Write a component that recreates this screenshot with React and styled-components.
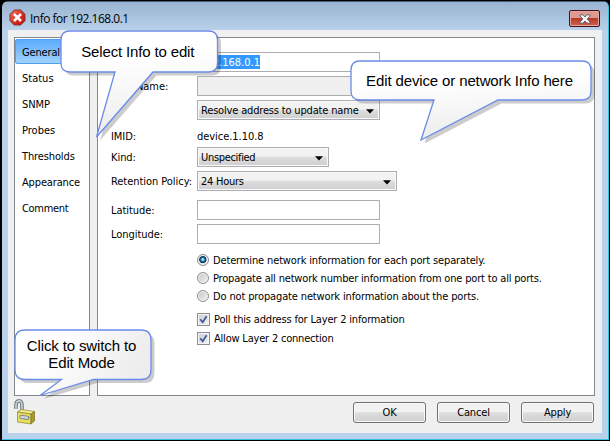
import React from "react";
import styled, { createGlobalStyle } from "styled-components";

const Global = createGlobalStyle`
  * { box-sizing: border-box; }
  body { margin: 0; overflow: hidden; background: #000; }
`;

const Frame = styled.div`
  position: relative;
  width: 610px;
  height: 441px;
  padding: 1px 1px 1px 2px;
  background: #000;
  font: 11px/14px "DejaVu Sans Condensed", "DejaVu Sans", sans-serif;
  font-stretch: condensed;
  color: #000;
`;

const Window = styled.div`
  height: 439px;
  border: solid #35c3dd;
  border-width: 0 1px 1px 0;
  border-radius: 6px 6px 0 0;
  padding: 0 6px 6px;
  background: linear-gradient(#4c5f74 0 1px, #99b4d1 1px, #b9d1ea 30px);
  display: flex;
  flex-direction: column;
`;

const TitleBar = styled.header`
  height: 29px;
  flex: none;
  display: flex;
  align-items: flex-start;
  font: 12px/16px "Open Sans", sans-serif;
`;

const TitleText = styled.span`
  margin: 10px auto 0 4px;
  white-space: nowrap;
  letter-spacing: -0.5px;
`;

const ErrorIcon = styled.svg`
  margin: 8px 0 0 1px;
  flex: none;
`;

const CloseButton = styled.button`
  width: 31px;
  height: 17px;
  margin: 9px 2px 0 0;
  padding: 0;
  border: 1px solid #43121b;
  border-radius: 2px;
  box-shadow: inset 0 0 0 1px #e3a59c;
  background: linear-gradient(#dd9a90 0 45%, #b93a26 50%, #cb6450);
  display: flex;
  align-items: center;
  justify-content: center;
`;

const Client = styled.main`
  flex: 1;
  background: #f0f0f0;
  padding: 7px 7px 0 6px;
`;

const Panels = styled.div`
  display: flex;
  gap: 7px;
  height: 359px;
`;

const CategoryList = styled.nav`
  width: 76px;
  background: #fff;
  border: 1px solid #828790;
  padding-top: 1px;
`;

const Category = styled.div`
  height: 26px;
  padding: 7px 0 0 7px;
  white-space: nowrap;
  letter-spacing: ${(p) => p.$ls}px;
  border-radius: 3px;
  ${(p) => p.$selected && `
    height: 25px;
    margin-bottom: 1px;
    background: linear-gradient(#5aaafb, #a3d3ff);
    box-shadow: inset 0 0 0 1px #4f9fee;
  `}
`;

const FormPanel = styled.section`
  width: 498px;
  background: #fff;
  border: 1px solid #828790;
  padding: 14px 0 0 13px;
`;

const Row = styled.div`
  display: grid;
  grid-template-columns: 86px 1fr;
  align-items: center;
  height: 20px;
  margin-bottom: ${(p) => p.$gap ?? 4}px;
`;

const Label = styled.span`
  white-space: nowrap;
  padding-top: 2px;
  letter-spacing: ${(p) => p.$ls ?? -0.05}px;
`;

const NameLabel = styled(Label)`
  padding-left: 25px;
`;

const Field = styled.div`
  width: 183px;
  height: 20px;
  border: 1px solid #abadb3;
  background: ${(p) => (p.$disabled ? "#f0f0f0" : "#fff")};
  padding: 2px 1px;
`;

const Selection = styled.span`
  display: block;
  height: 14px;
  width: 61px;
  padding-top: 1px;
  text-align: right;
  color: #fff;
  background: #3399ff;
  white-space: nowrap;
`;

const Combo = styled.div`
  width: ${(p) => p.$w}px;
  height: 20px;
  border: 1px solid #abadb3;
  box-shadow: inset 0 0 0 1px #fafafa;
  background: linear-gradient(#f2f2f2 0 45%, #dddddd 52%, #cfcfcf);
  display: flex;
  align-items: center;
  justify-content: space-between;
  padding: 0 5px 0 3px;
`;

const ArrowIcon = styled.svg`
  margin-top: 3px;
  flex: none;
`;

const Options = styled.div`
  margin-left: 86px;
  padding-top: 7px;
`;

const Option = styled.label`
  display: flex;
  align-items: center;
  height: 18px;
  gap: 4px;
`;

const Checks = styled.div`
  padding-top: 5px;
  display: grid;
  gap: 1px;
`;

const Radio = styled.span`
  width: 12px;
  height: 12px;
  flex: none;
  border-radius: 50%;
  border: 1px solid #8c8f94;
  box-shadow: inset 0 0 0 1px #f4f4f4;
  background: ${(p) =>
    p.$on
      ? "radial-gradient(circle at 48% 45%, #8bdcf5 0 1px, #1f6f9f 2px, #0c2d4d 3.3px, #dfe3e8 4px)"
      : "linear-gradient(135deg, #c4c6c9, #f2f2f2)"};
`;

const Check = styled.span`
  width: 13px;
  height: 13px;
  flex: none;
  border: 1px solid #8e8f8f;
  box-shadow: inset 0 0 0 1px #f4f4f4;
  background: linear-gradient(135deg, #c9cdd2, #f5f5f5);
  display: flex;
  align-items: center;
  justify-content: center;
`;

const Footer = styled.footer`
  display: flex;
  align-items: flex-start;
  padding-right: 1px;
`;

const LockIcon = styled.svg`
  margin: 3px auto 0 0;
`;

const Button = styled.button`
  width: 73px;
  height: 21px;
  margin: 6px 0 0 11px;
  padding: 0;
  border: 1px solid #707070;
  border-radius: 3px;
  box-shadow: inset 0 0 0 1px #fafafa;
  background: linear-gradient(#f2f2f2 0 45%, #dddddd 52%, #cfcfcf);
  font: inherit;
  color: #000;
  letter-spacing: -0.15px;
`;

const CalloutBox = styled.div`
  position: absolute;
  left: ${(p) => p.$x}px;
  top: ${(p) => p.$y}px;
  width: ${(p) => p.$w}px;
  height: ${(p) => p.$h}px;
  display: flex;
  align-items: center;
  justify-content: center;
  text-align: center;
  font: 15px/17px "Liberation Sans", Arial, sans-serif;
  letter-spacing: ${(p) => p.$ls}px;
  white-space: pre;
`;

const CalloutShape = styled.svg`
  position: absolute;
  inset: 0;
  overflow: visible;
`;

const CalloutText = styled.span`
  position: relative;
  padding-right: 2px;
`;

function Callout({ id, x, y, w, h, r, a, b, tip, ls, diag, children }) {
  const d = `M${r} 0H${w - r}Q${w} 0 ${w} ${r}V${h - r}Q${w} ${h} ${w - r} ${h}H${b}L${tip[0]} ${tip[1]}L${a} ${h}H${r}Q0 ${h} 0 ${h - r}V${r}Q0 0 ${r} 0Z`;
  return (
    <CalloutBox $x={x} $y={y} $w={w} $h={h} $ls={ls}>
      <CalloutShape width={w} height={h}>
        <defs>
          <linearGradient id={id} x1="0" y1="0" x2={diag ? 1 : 0.15} y2={diag ? 0.3 : 1}>
            <stop offset="0.3" stopColor="#fff" />
            <stop offset="1" stopColor="#ededed" />
          </linearGradient>
        </defs>
        <path d={d} transform="translate(3.5 3.5)" fill="#000" fillOpacity="0.2" />
        <path d={d} fill={`url(#${id})`} stroke="#6a8be8" strokeWidth="1.3" />
      </CalloutShape>
      <CalloutText>{children}</CalloutText>
    </CalloutBox>
  );
}

const Arrow = () => (
  <ArrowIcon width="8" height="5" viewBox="0 0 8 5">
    <path d="M0 0.3H8L4 4.5Z" />
  </ArrowIcon>
);

const Tick = () => (
  <svg width="9" height="9" viewBox="0 0 9 9">
    <path d="M1.2 4.2L3.7 7.3L7.6 1.2" fill="none" stroke="#41599c" strokeWidth="1.8" />
  </svg>
);

const categories = [
  ["General", -0.15],
  ["Status", 0],
  ["SNMP", -0.1],
  ["Probes", 0],
  ["Thresholds", -0.12],
  ["Appearance", -0.15],
  ["Comment", -0.3],
];

export default function App() {
  return (
    <Frame>
      <Global />
      <Window>
        <TitleBar>
          <ErrorIcon width="17" height="17" viewBox="0 0 17 17">
            <defs>
              <linearGradient id="err" x1="0" y1="0" x2="1" y2="1">
                <stop offset="0" stopColor="#f07a62" />
                <stop offset="0.55" stopColor="#dc2a1b" />
                <stop offset="1" stopColor="#b81010" />
              </linearGradient>
            </defs>
            <path d="M5.3 1H11.7L16 5.3V11.7L11.7 16H5.3L1 11.7V5.3Z" fill="url(#err)" stroke="#7e3733" strokeLinejoin="round" />
            <path d="M5 5L12 12M12 5L5 12" stroke="#fff" strokeWidth="2.6" />
          </ErrorIcon>
          <TitleText>Info for 192.168.0.1</TitleText>
          <CloseButton aria-label="Close">
            <svg width="12" height="10" viewBox="0 0 12 10">
              <path d="M1 0.8H4L6 3L8 0.8H11V2L8.2 5L11 8V9.2H8L6 7L4 9.2H1V8L3.8 5L1 2Z" fill="#f4f4f4" stroke="#4b4e63" strokeWidth="0.8" />
            </svg>
          </CloseButton>
        </TitleBar>
        <Client>
          <Panels>
            <CategoryList>
              {categories.map(([name, ls], i) => (
                <Category key={name} $selected={i === 0} $ls={ls}>{name}</Category>
              ))}
            </CategoryList>
            <FormPanel>
              <Row>
                <Label />
                <Field><Selection>192.168.0.1</Selection></Field>
              </Row>
              <Row>
                <NameLabel>Name:</NameLabel>
                <Field $disabled />
              </Row>
              <Row $gap={6}>
                <Label />
                <Combo $w={183}><Label $ls={-0.17}>Resolve address to update name</Label><Arrow /></Combo>
              </Row>
              <Row $gap={1}>
                <Label>IMID:</Label>
                <Label>device.1.10.8</Label>
              </Row>
              <Row>
                <Label>Kind:</Label>
                <Combo $w={132}><Label $ls={-0.32}>Unspecified</Label><Arrow /></Combo>
              </Row>
              <Row $gap={9}>
                <Label>Retention Policy:</Label>
                <Combo $w={200}><Label $ls={-0.25}>24 Hours</Label><Arrow /></Combo>
              </Row>
              <Row>
                <Label>Latitude:</Label>
                <Field />
              </Row>
              <Row $gap={0}>
                <Label>Longitude:</Label>
                <Field />
              </Row>
              <Options>
                <Option><Radio $on /><Label $ls={-0.14}>Determine network information for each port separately.</Label></Option>
                <Option><Radio /><Label $ls={-0.18}>Propagate all network number information from one port to all ports.</Label></Option>
                <Option><Radio /><Label $ls={-0.14}>Do not propagate network information about the ports.</Label></Option>
                <Checks>
                  <Option><Check><Tick /></Check><Label $ls={-0.17}>Poll this address for Layer 2 information</Label></Option>
                  <Option><Check><Tick /></Check><Label $ls={-0.2}>Allow Layer 2 connection</Label></Option>
                </Checks>
              </Options>
            </FormPanel>
          </Panels>
          <Footer>
            <LockIcon width="22" height="26" viewBox="0 0 22 26">
              <path d="M2 10V6Q2 2 5 2Q8 2 8 6V12" fill="none" stroke="#56646b" strokeWidth="3.4" />
              <path d="M2 10V6Q2 2 5 2Q8 2 8 6V12" fill="none" stroke="#c3d0d2" strokeWidth="1.8" />
              <path d="M3.5 13L7 10.5L20.5 12.5L17 15Z" fill="#f4ee8e" stroke="#8b8330" strokeWidth="0.7" />
              <path d="M3.5 13L17 15V25L3.5 23Z" fill="#e9dd5c" stroke="#8b8330" strokeWidth="0.7" />
              <path d="M17 15L20.5 12.5V22L17 25Z" fill="#ab9b26" stroke="#7d742a" strokeWidth="0.7" />
              <path d="M7.4 17.9L13.4 18.8" stroke="#7c8688" strokeWidth="4.2" strokeLinecap="round" />
              <path d="M7.4 17.9L13.4 18.8" stroke="#cfd8da" strokeWidth="2.4" strokeLinecap="round" strokeDasharray="2 1.6" />
            </LockIcon>
            <Button>OK</Button>
            <Button>Cancel</Button>
            <Button>Apply</Button>
          </Footer>
        </Client>
      </Window>
      <Callout id="c1" x={60.5} y={30.5} w={156.5} h={41} r={9} a={54} b={92} tip={[35.5, 106]} ls={-0.15}>Select Info to edit</Callout>
      <Callout id="c2" x={350.5} y={60.5} w={240} h={39} r={9} a={83} b={147} tip={[70, 79]} ls={-0.13}>Edit device or network Info here</Callout>
      <Callout id="c3" x={14.5} y={329.5} w={136} h={49.5} r={10} a={46.5} b={78.5} tip={[25, 65.5]} ls={-0.13} diag>{"Click to switch to\nEdit Mode"}</Callout>
    </Frame>
  );
}
